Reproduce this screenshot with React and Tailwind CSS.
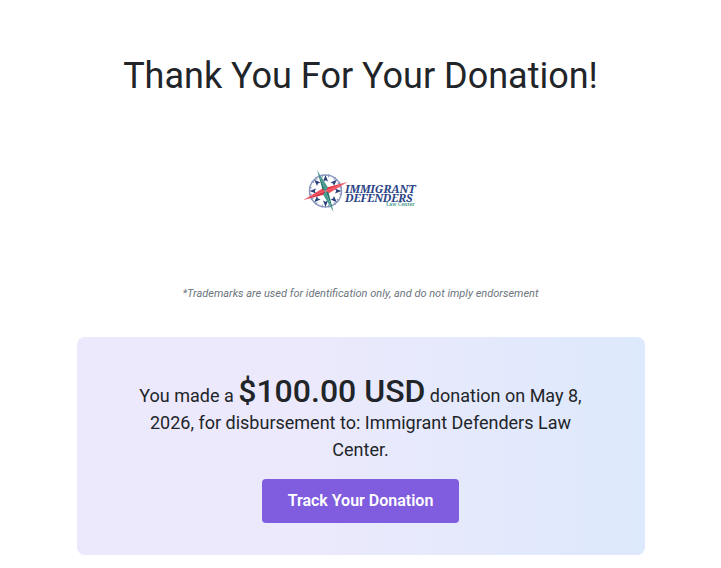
const donation = {
  amount: '$100.00 USD',
  date: 'May 8, 2026',
  charity: 'Immigrant Defenders Law Center',
}

const ticks = [12, 36, 60, 78, 102, 126, 144, 168, 192, 216, 240, 258, 282, 306, 324, 348]
const points = [0, 45, 90, 135, 180, 225, 270, 315]

function CharityLogo() {
  return (
    <svg
      role="img"
      aria-label={donation.charity}
      viewBox="0 0 116 46"
      className="w-[116px] h-[46px]"
    >
      {/* compass ring */}
      <circle cx="22.5" cy="23" r="16" fill="none" stroke="#8b98c0" strokeWidth="1.5" />
      {ticks.map(angle => (
        <path
          key={angle}
          d="M22.5 6V9"
          stroke="#8b98c0"
          strokeWidth="1"
          transform={`rotate(${angle} 22.5 23)`}
        />
      ))}

      {/* small navy points */}
      {points.map(angle => (
        <path
          key={angle}
          d="M22.5 7L25 13.5L22.5 12.3L20 13.5Z"
          fill="#2b4079"
          transform={`rotate(${angle} 22.5 23)`}
        />
      ))}

      {/* long needles */}
      <path d="M0.5 32L19.5 20.5L22.5 23Z" fill="#f04a58" />
      <path d="M0.5 32L22.5 23L21.5 26.5Z" fill="#d92f42" />
      <path d="M44.5 14L23.5 19.5L22.5 23Z" fill="#e93748" />
      <path d="M44.5 14L22.5 23L25.5 25.5Z" fill="#f0505e" />
      <path d="M14 2L25 19.5L22.5 23Z" fill="#4b9a91" />
      <path d="M14 2L19.5 21.5L22.5 23Z" fill="#24786f" />
      <path d="M30.5 44L25.5 24.5L22.5 23Z" fill="#24786f" />
      <path d="M30.5 44L20 26.5L22.5 23Z" fill="#4b9a91" />

      <g className="font-['Noto_Serif','Liberation_Serif',serif] font-bold">
        <text x="42" y="25" fontSize="11" fontStyle="italic" fill="#2a4385">IMMIGRANT</text>
        <text x="42" y="34" fontSize="11" fontStyle="italic" fill="#2a4385">DEFENDERS</text>
        <text x="83" y="38" fontSize="5" fill="#4f9f98">Law Center</text>
      </g>
    </svg>
  )
}

export default function App() {
  return (
    <main className="min-h-screen bg-white px-4 pt-12 pb-3 text-center text-[#212529] font-[Roboto,sans-serif]">
      <h1 className="text-4xl leading-14">Thank You For Your Donation!</h1>

      <div className="flex h-[174px] items-center justify-center">
        <CharityLogo />
      </div>

      <p className="text-[11px] leading-8 italic text-[#6c757d]">
        *Trademarks are used for identification only, and do not imply endorsement
      </p>

      <section className="mx-auto mt-[27px] max-w-[568px] rounded-lg bg-linear-to-r from-[#ece9fc] from-40% to-[#dde9fc] px-14 pt-[41px] pb-8">
        <p className="text-lg leading-[27px]">
          You made a <strong className="text-[32px] font-medium">{donation.amount}</strong>
          {` donation on ${donation.date}, for disbursement to: ${donation.charity}.`}
        </p>
        <button
          type="button"
          className="mt-4 h-11 rounded-sm bg-[#805ddf] px-[26px] font-semibold text-white"
        >
          Track Your Donation
        </button>
      </section>
    </main>
  )
}
